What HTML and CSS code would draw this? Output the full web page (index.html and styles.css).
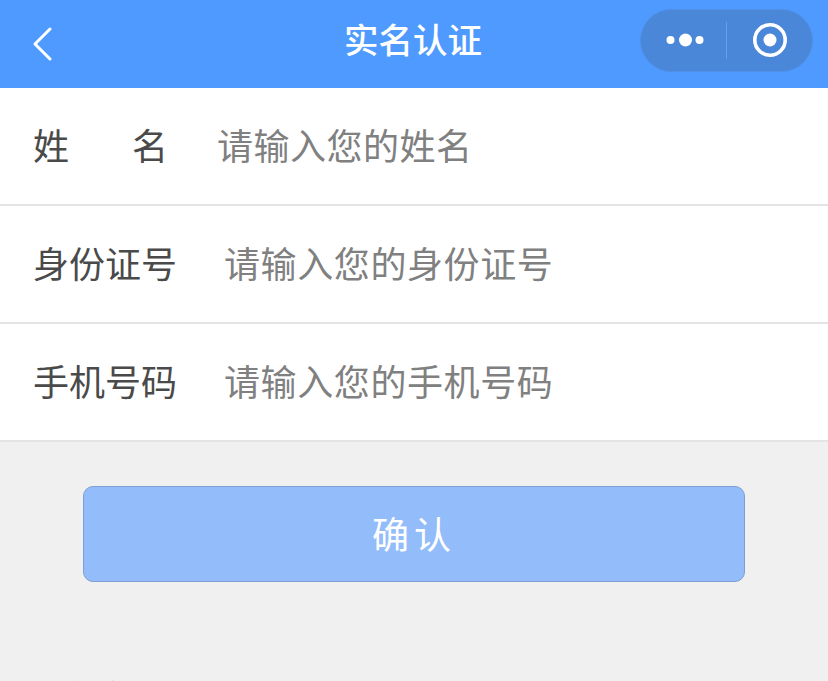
FILE: index.html
```html
<!DOCTYPE html>
<html lang="zh-CN">

<head>
    <meta charset="UTF-8">
    <meta name="viewport" content="width=device-width, initial-scale=1.0">
    <title>实名认证</title>
    <link rel="stylesheet" href="styles.css">
</head>

<body>
    <div class="page">
        <!-- Nav bar -->
        <div class="nav-bar">
            <svg class="back-icon" width="22" height="36" viewBox="0 0 22 36">
                <path d="M19 3 L4 18 L19 33" fill="none" stroke="#fff" stroke-width="3" stroke-linecap="round" stroke-linejoin="round"/>
            </svg>
            <h1 class="nav-title">实名认证</h1>
            <div class="capsule">
                <div class="capsule-part">
                    <svg width="40" height="16" viewBox="0 0 40 16">
                        <circle cx="6.5" cy="8" r="4" fill="#fff"/>
                        <circle cx="21.5" cy="8" r="6.5" fill="#fff"/>
                        <circle cx="35.5" cy="8" r="4" fill="#fff"/>
                    </svg>
                </div>
                <div class="capsule-line"></div>
                <div class="capsule-part">
                    <svg width="36" height="36" viewBox="0 0 36 36">
                        <circle cx="18" cy="18" r="15.2" fill="none" stroke="#fff" stroke-width="3.6"/>
                        <circle cx="18" cy="18" r="6.5" fill="#fff"/>
                    </svg>
                </div>
            </div>
        </div>

        <!-- Form -->
        <div class="form">
            <div class="form-row">
                <span class="form-label label-spread"><span>姓</span><span>名</span></span>
                <span class="form-hint hint-short">请输入您的姓名</span>
            </div>
            <div class="form-row">
                <span class="form-label">身份证号</span>
                <span class="form-hint">请输入您的身份证号</span>
            </div>
            <div class="form-row">
                <span class="form-label">手机号码</span>
                <span class="form-hint">请输入您的手机号码</span>
            </div>
        </div>

        <button type="button" class="confirm-button">确认</button>

        <div class="footer-text">实名认证</div>
    </div>
</body>

</html>
```

FILE: styles.css
```css
body {
    font-family: "Noto Sans CJK SC", "Liberation Sans", sans-serif;
    margin: 0;
    padding: 0;
    background-color: #f0f0f0;
    overflow: hidden;
}

.page {
    width: 828px;
    height: 681px;
    overflow: hidden;
}

.nav-bar {
    height: 88px;
    background-color: #4f9aff;
    display: flex;
    align-items: center;
    position: relative;
    padding: 0 15px 0 31px;
    box-sizing: border-box;
}

.nav-title {
    position: absolute;
    left: 0;
    right: 2px;
    top: 14px;
    margin: 0;
    text-align: center;
    font-size: 34.5px;
    line-height: 48px;
    font-weight: 500;
    color: #fff;
}

.capsule {
    margin-left: auto;
    width: 173px;
    height: 63px;
    margin-top: -8px;
    box-sizing: border-box;
    border-radius: 32px;
    background-color: #4a87d9;
    border: 1px solid #4f8fe6;
    display: flex;
    align-items: center;
}

.capsule-part {
    width: 85px;
    display: flex;
    justify-content: center;
    align-items: center;
}

.capsule-line {
    width: 1px;
    height: 37px;
    background-color: #6a9fe6;
}

.form {
    background-color: #fff;
}

.form-row {
    height: 118px;
    box-sizing: border-box;
    border-bottom: 2px solid #e4e4e4;
    padding: 0 0 4px 33px;
    display: flex;
    align-items: center;
    font-size: 36px;
}

.form-label {
    width: 191px;
    color: #4a4a4a;
}

.label-spread {
    width: 135px;
    margin-right: 49px;
    display: flex;
    justify-content: space-between;
}

.form-hint {
    color: #808080;
    letter-spacing: 0.6px;
}

.hint-short {
    letter-spacing: 0.5px;
}

.confirm-button {
    display: block;
    width: 662px;
    height: 96px;
    margin: 44px 0 0 83px;
    padding: 0 0 2px;
    background-color: #93bcfa;
    color: #fff;
    border: 1px solid #7f9fd4;
    border-radius: 10px;
    font-family: inherit;
    font-size: 37px;
    letter-spacing: 5px;
    cursor: pointer;
}

.footer-text {
    margin: 90px 0 0 62px;
    font-size: 36px;
    line-height: 48px;
    color: #4a4a4a;
}
```
